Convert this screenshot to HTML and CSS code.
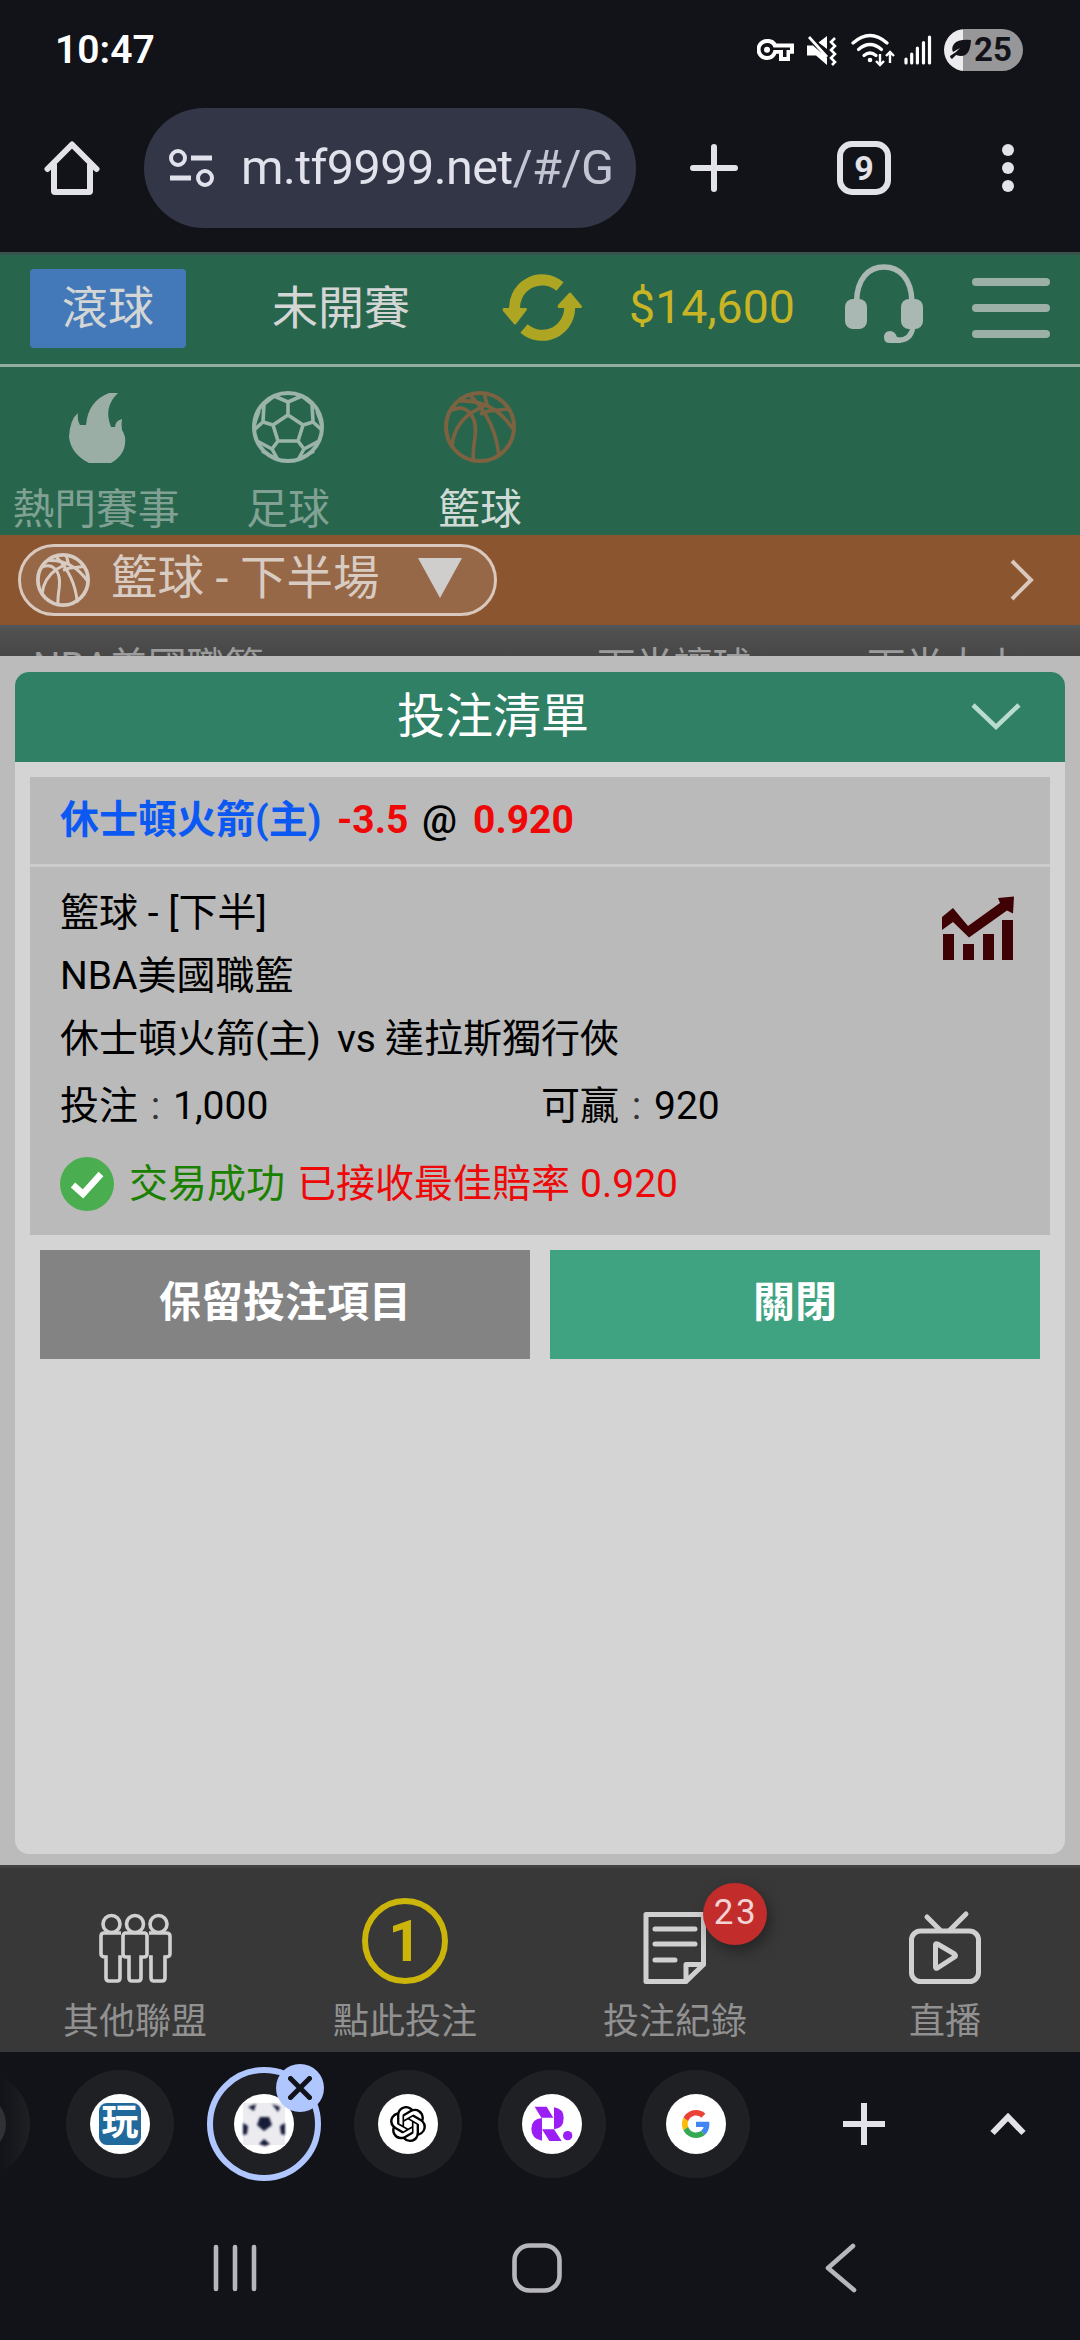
FILE: index.html
```html
<!DOCTYPE html>
<html lang="zh-Hant">
<head>
<meta charset="utf-8">
<title>投注清單</title>
<link rel="stylesheet" href="styles.css">
</head>
<body>
<div class="screen">

  <header class="status">
    <span class="status-time">10:47</span>
    <div class="status-icons">
      <svg class="ic-key" width="37" height="22" viewBox="0 0 37 22"><path fill="#fff" fill-rule="evenodd" d="M10 0a10.500 10.500 0 1 0 0 21 10.500 10.500 0 0 0 9.500-6.200H22V22h11v-7.200h4V4.500H19.500A10.500 10.500 0 0 0 10 0zm0 4a6.500 6.500 0 0 1 6.500 4.500H33v2.500h-3.500v7H26v-7h-9.500A6.500 6.500 0 1 1 10 4zm0 3.700a3 3 0 1 0 0 6 3 3 0 0 0 0-6z"/></svg>
      <svg class="ic-mute" width="30" height="31" viewBox="0 0 30 31"><path fill="#fff" d="M20 1v13L11.500 7.500zM0 10.500h6L20 23v7l-11-9.500H0zM3 1l18 20-2 2L1 3z"/><path d="M28 3l-4 4 4 4-4 4 4 4-4 4 4 4-3 3" fill="none" stroke="#fff" stroke-width="2.600"/></svg>
      <svg class="ic-wifi" width="44" height="35" viewBox="0 0 44 35"><g fill="none" stroke="#fff" stroke-width="3.200" stroke-linecap="round"><path d="M2 10q17-15 34 0"/><path d="M7.500 16.500q11.500-10 23 0"/><path d="M13 22.500q6-5 12 0"/></g><circle cx="19" cy="27" r="2.300" fill="#fff"/><path d="M29 21v11m-4-4l4 4 4-4M39 30V19m-4 4l4-4 4 4" fill="none" stroke="#fff" stroke-width="2.400"/></svg>
      <svg class="ic-signal" width="28" height="30" viewBox="0 0 28 30"><path d="M2 24v4M7.700 19v9M13.400 13v15M19.500 7.500V28M25.500 2v26" stroke="#fff" stroke-width="3.200" stroke-linecap="round"/></svg>
      <div class="battery">
        <svg width="24" height="22" viewBox="0 0 24 22"><path d="M22 1q-13-1-17 4-3 4-1 8L11 9 7 13l-6 4q0 2 2 3l4-4q14 5 15-15z" fill="#121318"/></svg>
        <span>25</span>
      </div>
    </div>
  </header>

  <div class="browser">
    <svg class="ic-home" width="56" height="56" viewBox="0 0 56 56"><path d="M3.500 29L28 4.500 52.500 29M10 25v26q0 1 1 1h34q1 0 1-1V25" fill="none" stroke="#e3e2e9" stroke-width="6" stroke-linecap="round" stroke-linejoin="round"/></svg>
    <div class="url-pill">
      <svg width="46" height="38" viewBox="0 0 46 38"><g fill="none" stroke="#e2e2ec" stroke-width="4"><circle cx="9" cy="9" r="7"/><circle cx="36" cy="29" r="7"/><path d="M22 9h21M1 29h21" stroke-width="5"/></g></svg>
      <span class="url">m.tf9999.net<span>/#/G</span></span>
    </div>
    <svg class="ic-new" width="48" height="48" viewBox="0 0 48 48"><path d="M24 3v42M3 24h42" stroke="#e3e2e9" stroke-width="6" stroke-linecap="round"/></svg>
    <div class="tab-count">9</div>
    <svg class="ic-more" width="12" height="48" viewBox="0 0 12 48"><g fill="#e3e2e9"><circle cx="6" cy="6" r="6"/><circle cx="6" cy="24" r="6"/><circle cx="6" cy="42" r="6"/></g></svg>
  </div>

  <div class="topbar">
    <div class="live">滾球</div>
    <div class="upcoming">未開賽</div>
    <svg class="ic-refresh" width="80" height="68" viewBox="0 0 80 68"><g fill="none" stroke="#aea523" stroke-width="11"><path d="M13 38a27.500 27.500 0 0 1 45-25.500"/><path d="M22 54.500A27.500 27.500 0 0 0 67.500 31"/></g><path d="M2 34h22q2 1 0 3L14 50q-1 1-2 0L1 37q-1-3 1-3zM57 34h22q2-1 0-3L69 19q-1-1-2 0L56 31q-1 3 1 3z" fill="#aea523"/></svg>
    <div class="balance">$14,600</div>
    <svg class="ic-headset" width="78" height="80" viewBox="0 0 78 80"><path d="M11.500 38C12 14 24 3 39 3s27.500 11 28 35" fill="none" stroke="#a9b8b2" stroke-width="5.500"/><rect y="35" width="22" height="30" rx="8" fill="#a9b8b2"/><rect x="56" y="35" width="22" height="30" rx="8" fill="#a9b8b2"/><path d="M68 63q-2 13-14 13h-6" fill="none" stroke="#a9b8b2" stroke-width="5"/><path d="M45 79q-6 0-6-5.500 0-6.500 6-6.500 5 0 7 6l4 1v5z" fill="#a9b8b2"/></svg>
    <div class="burger"><i></i><i></i><i></i></div>
  </div>

  <nav class="sports">
    <div class="sport">
      <svg width="72" height="72" viewBox="0 0 72 72"><path d="M58 2h-9Q28 10 26 34h-6q-3-5-2-12-8 6-9 24 2 17 20 26h22q16-9 14-26-1-4-3-7-1-6 0-11-7 2-7 8h-4q-8-20 7-34z" fill="#9aaea6"/></svg>
      <span>熱門賽事</span>
    </div>
    <div class="sport">
      <svg width="72" height="72" viewBox="0 0 72 72"><g fill="none" stroke="#9bb4aa" stroke-width="3.600"><circle cx="36" cy="36" r="34" stroke-width="4"/><path d="M36 24l15 10-5 16H26l-5-16zM36 24V11M51 34l10-3M46 50l6 8M26 50l-6 8M21 34l-10-3"/><path d="M22 5l14 6 14-6M60 13l1 18 9 8M67 50l-15 8-6 11M26 69l-6-11L5 50M2 39l9-8 1-18M22 5L12 13M50 5l10 8M65 20l5 14M7 20L2 34M46 69l16-9M10 60l16 9"/></g></svg>
      <span>足球</span>
    </div>
    <div class="sport active">
      <svg width="72" height="72" viewBox="0 0 72 72"><g fill="none" stroke="#7d6242" stroke-width="3.600"><circle cx="36" cy="36" r="34" stroke-width="4"/><path d="M8 19q11-5 18 3 7 8 5 24-2 12-2 23M15 10q34-2 54 28M26 4q26 26 29 62M40 2l3 11-16 9Q10 34 8 55M65 18l-20 2-9 3"/></g></svg>
      <span>籃球</span>
    </div>
  </nav>

  <div class="filter">
    <div class="filter-pill">
      <svg width="54" height="54" viewBox="0 0 72 72"><g fill="none" stroke="#d8cbc2" stroke-width="4"><circle cx="36" cy="36" r="33.500" stroke-width="5"/><path d="M8 19q11-5 18 3 7 8 5 24-2 12-2 23M15 10q34-2 54 28M26 4q26 26 29 62M40 2l3 11-16 9Q10 34 8 55M65 18l-20 2-9 3"/></g></svg>
      <span>籃球 - 下半場</span>
      <svg width="44" height="40" viewBox="0 0 44 40"><path d="M0 0h44L22 40z" fill="#cfcecd"/></svg>
    </div>
    <svg width="26" height="44" viewBox="0 0 26 44"><path d="M3 3l19 19L3 41" fill="none" stroke="#d8c8bd" stroke-width="4"/></svg>
  </div>

  <div class="columns">
    <span class="col-league">NBA美國職籃</span><span class="col-odds">下半讓球</span><span>下半大小</span>
  </div>

  <section class="sheet">
    <div class="panel">
      <div class="panel-head">
        <h1>投注清單</h1>
        <svg width="50" height="30" viewBox="0 0 50 30"><path d="M2 3l23 22L48 3" fill="none" stroke="#b9dccf" stroke-width="4.500"/></svg>
      </div>
      <div class="card">
        <div class="pick"><b class="team">休士頓火箭(主)</b><b class="red line">-3.5</b><span class="at">@</span><b class="red">0.920</b></div>
        <div class="detail">
          <div class="detail-main">
            <p>籃球 - [下半]</p>
            <p>NBA美國職籃</p>
            <p>休士頓火箭(主)<span class="vs">vs</span>達拉斯獨行俠</p>
          </div>
          <svg width="74" height="66" viewBox="0 0 74 66"><path fill="#3e0204" d="M1 21L12 12l15 18 32-23-2-5 16-1.500-1 17-6-3-38 27L12 26 1 34zM2 38h11v26H2zM22 48h11v16H22zM42 38h11v26H42zM61 24h11v40H61z"/></svg>
        </div>
        <div class="amounts">
          <div class="stake">投注<i>:</i>1,000</div>
          <div>可贏<i>:</i>920</div>
        </div>
        <div class="result">
          <svg width="54" height="54" viewBox="0 0 54 54"><circle cx="27" cy="27" r="27" fill="#4aae50"/><path d="M13 28l10 9 18-20" fill="none" stroke="#fff" stroke-width="6.500"/></svg>
          <span class="ok">交易成功</span><span class="red">已接收最佳賠率<em>0.920</em></span>
        </div>
      </div>
      <div class="actions"><div class="btn keep">保留投注項目</div><div class="btn close">關閉</div></div>
    </div>
  </section>

  <nav class="bottom">
    <div class="item">
      <svg width="86" height="86" viewBox="0 0 86 86"><g fill="none" stroke="#d0d0d0" stroke-width="3.600"><circle cx="19.500" cy="26" r="8.500"/><circle cx="43" cy="26" r="8.500"/><circle cx="66.500" cy="26" r="8.500"/><path d="M33 35q-2 1-2 3v18q0 3 3 3h3v21q0 3 3 3h6q3 0 3-3V59h3q3 0 3-3V38q0-2-2-3zM29 35H12q-3 0-3 3v18q0 3 5 3v21q0 3 3 3h8q3 0 3-3V59h2M57 35h17q4 0 4 3v18q0 3-5 3v21q0 3-3 3h-8q-3 0-3-3V59h-2"/></g></svg>
      <span>其他聯盟</span>
    </div>
    <div class="item">
      <div class="count">1</div>
      <span>點此投注</span>
    </div>
    <div class="item">
      <div class="note">
        <svg width="86" height="86" viewBox="0 0 86 86"><g fill="none" stroke="#d0d0d0" stroke-width="5" stroke-linejoin="round" stroke-linecap="round"><path d="M14 16.500h57.500v50L54 83.500H14zM71.500 66.500H54v17"/><path d="M23 31h40M23 46h40M23 62h20"/></g></svg>
        <div class="badge">23</div>
      </div>
      <span>投注紀錄</span>
    </div>
    <div class="item">
      <svg width="86" height="86" viewBox="0 0 86 86"><g fill="none" stroke="#d0d0d0" stroke-width="5" stroke-linejoin="round" stroke-linecap="round"><rect x="9.500" y="33" width="67" height="50.500" rx="9"/><path d="M25 19l13 13M64 16L48 32M33.500 47q0-2 2-1l17 10q2 2 0 3l-17 11q-2 1-2-1z"/></g></svg>
      <span>直播</span>
    </div>
  </nav>

  <div class="tabs">
    <div class="chip edge"></div>
    <div class="chip"><div class="fav"><div class="fav-play">玩</div></div></div>
    <div class="chip current">
      <svg width="60" height="60" viewBox="0 0 60 60"><defs><filter id="soft"><feGaussianBlur stdDeviation="1.200"/></filter></defs><circle cx="30" cy="30" r="30" fill="#fff"/><path d="M9 9h42v42H9z" fill="#ecebef"/><g fill="#131a38" filter="url(#soft)"><path d="M26 23h9l3 8-8 6-7-6zM14 13l8-3-2 7zM38 10l8 3-2 5zM9 29l5 3-1 8-4 1zM51 29l-5 3 1 8 4 1zM25 50l5-5 6 5-5 2z"/></g></svg>
      <div class="tab-close"><svg width="24" height="24" viewBox="0 0 24 24"><path d="M2.500 2.500l19 19M21.500 2.500l-19 19" stroke="#121318" stroke-width="5" stroke-linecap="round"/></svg></div>
    </div>
    <div class="chip"><div class="fav"><svg width="36" height="36" viewBox="0 0 24 24"><path d="M22.2819 9.8211a5.9847 5.9847 0 0 0-.5157-4.9108 6.0462 6.0462 0 0 0-6.5098-2.9A6.0651 6.0651 0 0 0 4.9807 4.1818a5.9847 5.9847 0 0 0-3.9977 2.9 6.0462 6.0462 0 0 0 .7427 7.0966 5.98 5.98 0 0 0 .511 4.9107 6.051 6.051 0 0 0 6.5146 2.9001A5.9847 5.9847 0 0 0 13.2599 24a6.0557 6.0557 0 0 0 5.7718-4.2058 5.9894 5.9894 0 0 0 3.9977-2.9001 6.0557 6.0557 0 0 0-.7475-7.0729zm-9.022 12.6081a4.4755 4.4755 0 0 1-2.8764-1.0408l.1419-.0804 4.7783-2.7582a.7948.7948 0 0 0 .3927-.6813v-6.7369l2.02 1.1686a.071.071 0 0 1 .038.052v5.5826a4.504 4.504 0 0 1-4.4945 4.4944zm-9.6607-4.1254a4.4708 4.4708 0 0 1-.5346-3.0137l.142.0852 4.783 2.7582a.7712.7712 0 0 0 .7806 0l5.8428-3.3685v2.3324a.0804.0804 0 0 1-.0332.0615L9.74 19.9502a4.4992 4.4992 0 0 1-6.1408-1.6464zM2.3408 7.8956a4.485 4.485 0 0 1 2.3655-1.9728V11.6a.7664.7664 0 0 0 .3879.6765l5.8144 3.3543-2.0201 1.1685a.0757.0757 0 0 1-.071 0l-4.8303-2.7865A4.504 4.504 0 0 1 2.3408 7.872zm16.5963 3.8558L13.1038 8.364 15.1192 7.2a.0757.0757 0 0 1 .071 0l4.8303 2.7913a4.4944 4.4944 0 0 1-.6765 8.1042v-5.6772a.79.79 0 0 0-.407-.667zm2.0107-3.0231l-.142-.0852-4.7735-2.7818a.7759.7759 0 0 0-.7854 0L9.409 9.2297V6.8974a.0662.0662 0 0 1 .0284-.0615l4.8303-2.7866a4.4992 4.4992 0 0 1 6.6802 4.66zM8.3065 12.863l-2.02-1.1638a.0804.0804 0 0 1-.038-.0567V6.0742a4.4992 4.4992 0 0 1 7.3757-3.4537l-.142.0805L8.704 5.459a.7948.7948 0 0 0-.3927.6813zm1.0976-2.3654l2.602-1.4998 2.6069 1.4998v2.9994l-2.5974 1.4997-2.6067-1.4997Z"/></svg></div></div>
    <div class="chip"><div class="fav"><svg width="68" height="68" viewBox="0 0 204 204"><g fill="#9b1ff5"><path d="M50 50h36l20 33H70zM72 84v68q-32-6-32-36 0-29 32-32zM108 52q29 4 29 32 0 32-29 34zM72 118h36l23 35H94z"/><circle cx="149" cy="137" r="14"/></g></svg></div></div>
    <div class="chip"><div class="fav"><svg width="28" height="28" viewBox="0 0 48 48"><path fill="#EA4335" d="M24 9.500c3.540 0 6.710 1.220 9.210 3.600l6.850-6.850C35.900 2.380 30.470 0 24 0 14.620 0 6.510 5.380 2.560 13.220l7.980 6.190C12.430 13.720 17.740 9.500 24 9.500z"/><path fill="#4285F4" d="M46.980 24.550c0-1.570-.15-3.090-.38-4.550H24v9.020h12.940c-.58 2.960-2.260 5.480-4.780 7.180l7.730 6c4.510-4.180 7.090-10.360 7.090-17.650z"/><path fill="#FBBC05" d="M10.530 28.590c-.48-1.450-.76-2.990-.76-4.590s.27-3.140.76-4.590l-7.980-6.190C.92 16.460 0 20.120 0 24c0 3.880.92 7.540 2.560 10.780l7.970-6.190z"/><path fill="#34A853" d="M24 48c6.480 0 11.930-2.130 15.890-5.810l-7.730-6c-2.150 1.450-4.920 2.300-8.160 2.300-6.260 0-11.570-4.220-13.470-9.910l-7.980 6.190C6.510 42.620 14.620 48 24 48z"/></svg></div></div>
    <svg class="tab-new" width="42" height="42" viewBox="0 0 42 42"><path d="M21 0v42M0 21h42" stroke="#e3e2e9" stroke-width="6"/></svg>
    <svg class="tab-up" width="36" height="24" viewBox="0 0 36 24"><path d="M2.500 21L18 5l15.500 16" fill="none" stroke="#e3e2e9" stroke-width="6"/></svg>
  </div>

  <div class="sysnav">
    <svg width="44" height="48" viewBox="0 0 44 48"><path d="M3 3v42M22 3v42M41 3v42" stroke="#b7b7bb" stroke-width="4.600" stroke-linecap="round"/></svg>
    <svg width="50" height="50" viewBox="0 0 50 50"><rect x="2.500" y="2.500" width="45" height="45" rx="15" fill="none" stroke="#b7b7bb" stroke-width="4.600"/></svg>
    <svg width="32" height="50" viewBox="0 0 32 50"><path d="M28 3L3 25l26 22" fill="none" stroke="#b7b7bb" stroke-width="4.600" stroke-linecap="round" stroke-linejoin="round"/></svg>
  </div>
</div>
</body>
</html>
```
FILE: styles.css
```css
* { box-sizing: border-box; }
body { margin: 0; background: #121318; font-family: Roboto, "Noto Sans CJK TC", sans-serif; }
svg { display: block; flex: none; }
i, em { font-style: normal; }
h1, p { margin: 0; font-weight: 400; }
.screen { width: 1080px; height: 2340px; overflow: hidden; display: flex; flex-direction: column; white-space: nowrap; }
.screen > * { flex: none; }

/* status bar */
.status { height: 100px; padding: 0 57px 0 55px; display: flex; justify-content: space-between; align-items: center; }
.status-time { color: #fff; font-size: 39px; font-weight: 600; line-height: 102px; }
.status-icons { display: flex; align-items: center; }
.ic-mute { margin-left: 13px; }
.ic-wifi { margin-left: 14px; }
.ic-signal { margin-left: 9px; }
.battery { margin-left: 12px; width: 79px; height: 42px; border-radius: 21px; background: linear-gradient(90deg, #ececee 19px, #97979a 19px); display: flex; align-items: center; padding-left: 5px; color: #121318; font-size: 33px; font-weight: 700; line-height: 42px; }
.battery span { margin-left: 1px; }

/* browser toolbar */
.browser { height: 152px; display: flex; align-items: center; padding: 0 66px 16px 44px; }
.url-pill { margin-left: 44px; width: 492px; height: 120px; border-radius: 60px; background: #323646; display: flex; align-items: center; padding-left: 25px; }
.url { margin-left: 26px; font-size: 48.500px; line-height: 122px; color: #e2e2ec; letter-spacing: -0.550px; }
.url span { color: #c4c5d2; }
.ic-new { margin-left: 54px; }
.tab-count { margin-left: 99px; width: 54px; height: 54px; border: 6px solid #e3e2e9; border-radius: 15px; color: #e3e2e9; font-size: 34px; font-weight: 700; line-height: 43px; text-align: center; }
.ic-more { margin-left: 111px; }

/* site header */
.topbar { height: 115px; border-top: 3px solid #38524c; border-bottom: 3px solid #93ad9f; background: #27664d; display: flex; align-items: flex-start; font-size: 46px; color: #d4d6d5; }
.live { margin: 14px 0 0 30px; width: 156px; height: 79px; border-radius: 4px; background: #4479b9; text-align: center; line-height: 79px; }
.upcoming { margin: 14px 0 0 86px; width: 138px; line-height: 79px; }
.ic-refresh { margin: 19px 0 0 92px; }
.balance { margin: 14px 0 0 47px; width: 169px; font-size: 46.500px; line-height: 77px; color: #c9b524; }
.ic-headset { margin: 9px 0 0 47px; }
.burger { margin: 23px 0 0 49px; width: 78px; display: flex; flex-direction: column; gap: 18px; }
.burger i { height: 8px; border-radius: 4px; background: #9db0a8; }

.sports { height: 168px; background: #27664d; display: flex; padding-top: 24px; }
.sport { width: 192px; display: flex; flex-direction: column; align-items: center; font-size: 41.800px; line-height: 50px; color: #80a193; }
.sport span { margin-top: 22px; }
.sport.active { color: #d0dad6; }

.filter { height: 90px; background: #8b5530; display: flex; align-items: center; justify-content: space-between; padding: 0 45px 0 18px; }
.filter-pill { width: 479px; height: 72px; border: 3px solid #d8c8bd; border-radius: 36px; background: #966848; display: flex; align-items: center; padding-left: 15px; font-size: 46.500px; line-height: 66px; color: #d8cbc2; }
.filter-pill span { margin: -4px 0 0 21px; width: 307px; }
.filter-pill svg:last-child { margin-top: -4px; }

/* league header row, mostly covered by the bet slip */
.columns { height: 31px; overflow: hidden; background: linear-gradient(#54575a, #505050 6px, #474747); display: flex; padding: 14px 0 0 33px; font-size: 38.500px; line-height: 56px; color: #9c9c9c; }
.col-league { width: 564px; }
.col-odds { width: 270px; }

/* bet slip */
.sheet { height: 1209px; background: #bbb; padding: 16px 15px 11px; }
.panel { height: 1182px; border-radius: 14px; background: #d4d4d4; overflow: hidden; }
.panel-head { height: 90px; background: #2f8064; display: flex; align-items: center; padding: 0 44px 0 382px; justify-content: space-between; }
.panel-head h1 { color: #fff; font-size: 48px; line-height: 90px; }
.card { margin: 15px 15px 0; height: 458px; background: #bababa; color: #000; font-size: 39px; }
.pick { height: 90px; border-bottom: 3px solid #ccc; padding-left: 30px; display: flex; line-height: 86px; }
.team { color: #0b59f2; width: 277px; }
.red { color: #ee0808; }
.line { width: 85px; }
.at { width: 51px; font-weight: 500; }
.detail { display: flex; justify-content: space-between; padding: 15px 35px 0 30px; }
.detail > svg { margin-top: 14px; }
.detail p { line-height: 63px; }
.vs { margin: 0 9px 0 16px; }
.amounts { display: flex; padding-left: 30px; line-height: 70px; }
.stake { width: 481px; }
.amounts i { display: inline-block; width: 35px; text-align: center; color: #333; }
.result { display: flex; align-items: center; padding-left: 30px; height: 54px; margin-top: 16px; line-height: 54px; }
.ok { margin: 0 12px 0 15px; color: #198000; }
.result em { margin-left: 10px; }
.actions { display: flex; gap: 20px; padding: 15px 25px; }
.btn { flex: 1; height: 109px; color: #fff; font-size: 42px; font-weight: 700; line-height: 105px; text-align: center; }
.keep { background: #838383; }
.close { background: #3fa280; }

/* site bottom navigation */
.bottom { height: 187px; border-top: 3px solid #424242; background: #383838; display: flex; padding-top: 30px; }
.item { width: 270px; display: flex; flex-direction: column; align-items: center; font-size: 36px; line-height: 44px; color: #919191; }
.item > span { margin-top: 16px; }
.count { width: 86px; height: 86px; border: 6px solid #cbb50b; border-radius: 50%; color: #cbb50b; font-size: 58px; font-weight: 700; line-height: 74px; text-align: center; }
.note { position: relative; }
.badge { position: absolute; left: 71px; top: -15px; width: 64px; height: 62px; border-radius: 50%; background: #c22c2b; color: #f3d3d3; font-size: 35px; line-height: 60px; letter-spacing: 2.500px; text-align: center; padding-left: 2px; box-shadow: 4px 6px 14px rgba(0, 0, 0, 0.35); }

/* browser tab strip */
.tabs { height: 144px; display: flex; align-items: center; gap: 36px; }
.chip { flex: none; width: 108px; height: 108px; border-radius: 50%; background: #1f2024; display: flex; align-items: center; justify-content: center; position: relative; }
.edge { margin-left: -78px; background: linear-gradient(90deg, #121318 72%, #1f2024); }
.edge::after { content: ""; position: absolute; left: 24px; width: 60px; height: 60px; border-radius: 50%; background: #303135; }
.current { width: 114px; height: 114px; margin: 0 -3px; border: 6px solid #b0c6ff; }
.tab-close { position: absolute; left: 63px; top: -9px; width: 48px; height: 48px; border-radius: 50%; background: #b0c6ff; display: flex; align-items: center; justify-content: center; }
.fav { width: 60px; height: 60px; border-radius: 50%; background: #fff; display: flex; align-items: center; justify-content: center; }
.fav-play { width: 42px; height: 42px; border-radius: 8px; background: #22699b; color: #fff; font-size: 37px; line-height: 40px; font-weight: 700; text-align: center; }
.tab-new { margin-left: 57px; }
.tab-up { margin-left: 69px; }

/* system navigation */
.sysnav { height: 144px; display: flex; align-items: center; padding: 0 0 0 213px; }
.sysnav svg:nth-child(2) { margin-left: 255px; }
.sysnav svg:nth-child(3) { margin-left: 263px; }
```
